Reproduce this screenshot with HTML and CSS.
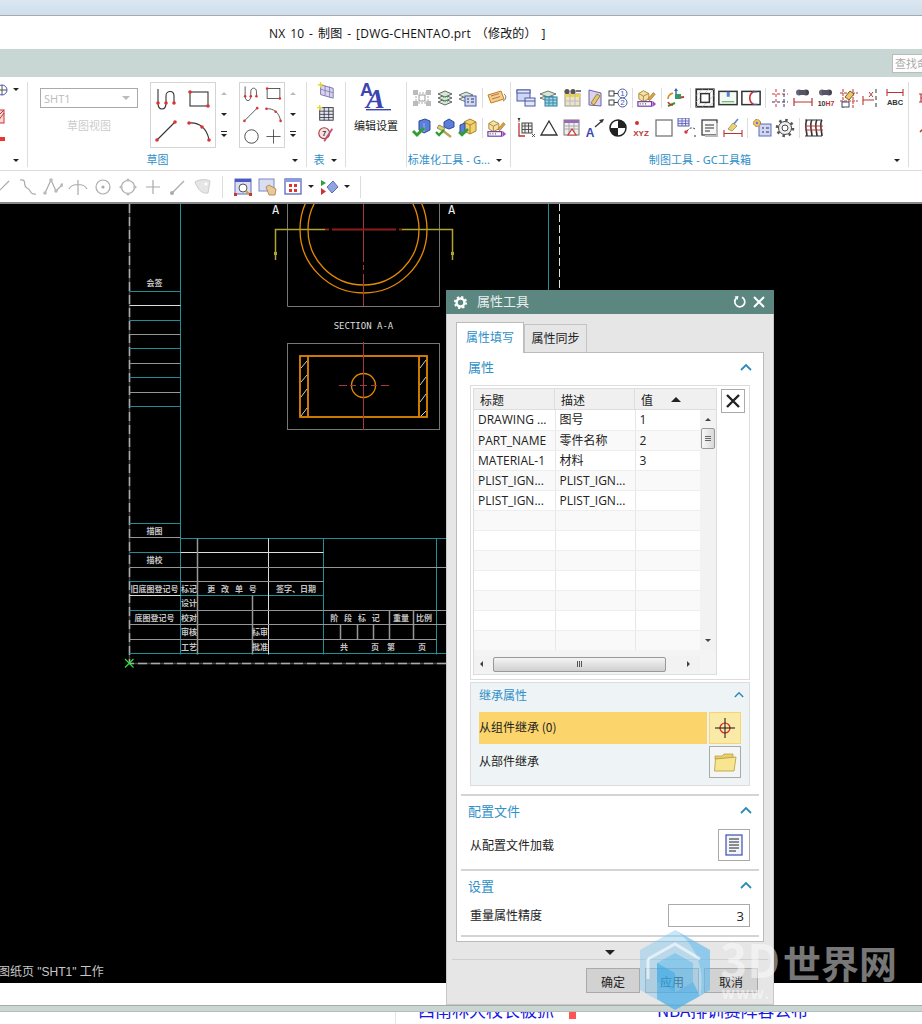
FILE: index.html
```html
<!DOCTYPE html>
<html lang="zh">
<head>
<meta charset="utf-8">
<title>NX 10 - 制图</title>
<link rel="stylesheet" href="styles.css">
</head>
<body>
<svg class="defs" width="0" height="0" aria-hidden="true">
  <defs>
    <symbol id="g-curve" viewBox="0 0 24 24"><path d="M3 2v14c0 8 8 8 8 0V9c0-6 8-6 8 0v7" fill="none" stroke="#333" stroke-width="1.1"/><circle cx="3" cy="16" r="1.8" fill="#d33"/><circle cx="11" cy="16" r="1.8" fill="#d33"/><circle cx="19" cy="16" r="1.8" fill="#d33"/></symbol>
    <symbol id="g-rect" viewBox="0 0 24 24"><rect x="3" y="5" width="18" height="14" fill="none" stroke="#333" stroke-width="1.1"/><circle cx="3" cy="5" r="1.8" fill="#d33"/><circle cx="21" cy="19" r="1.8" fill="#d33"/></symbol>
    <symbol id="g-line" viewBox="0 0 24 24"><path d="M2 21 20 3" stroke="#333" stroke-width="1.1"/><circle cx="2" cy="21" r="1.8" fill="#d33"/><circle cx="20" cy="3" r="1.8" fill="#d33"/></symbol>
    <symbol id="g-arc" viewBox="0 0 24 24"><path d="M2 4C12 3 20 9 22 21" fill="none" stroke="#333" stroke-width="1.1"/><circle cx="2" cy="4" r="1.8" fill="#d33"/><circle cx="15" cy="8" r="1.8" fill="#d33"/><circle cx="22" cy="21" r="1.8" fill="#d33"/></symbol>
    <symbol id="g-circle" viewBox="0 0 24 24"><circle cx="12" cy="12" r="9.5" fill="none" stroke="#333" stroke-width="1.2"/></symbol>
    <symbol id="g-plus" viewBox="0 0 24 24"><path d="M12 2v20M2 12h20" stroke="#333" stroke-width="1.1"/></symbol>

    <symbol id="t-new" viewBox="0 0 20 20"><path d="M4 3 18 7v11L4 14z" fill="#d8d4ee" stroke="#776fa8"/><path d="M4 8l14 4M9 4v11M14 5v12" stroke="#776fa8" stroke-width=".8"/><path d="M4 0v6M1 3h6" stroke="#e9d52e" stroke-width="1.6"/></symbol>
    <symbol id="t-table" viewBox="0 0 20 20"><rect x="3" y="4" width="15" height="14" fill="#dfe3f3" stroke="#333"/><path d="M3 8h15M3 11.5h15M3 15h15M8 4v14M13 4v14" stroke="#333" stroke-width=".9"/><path d="M3 1v6M0 4h6" stroke="#e9d52e" stroke-width="1.6"/></symbol>
    <symbol id="t-ball" viewBox="0 0 20 20"><circle cx="8" cy="8" r="6" fill="#f5e3e3" stroke="#a33" stroke-width="1.2"/><text x="8" y="11.5" class="svg-num" fill="#333">7</text><path d="M17 3 8 17" stroke="#b57" stroke-width="2"/></symbol>
    <symbol id="t-edit" viewBox="0 0 32 30"><text x="0" y="14" class="svg-a-small">A</text><text x="6" y="26" class="svg-a-big">A</text><rect x="6" y="27" width="25" height="1.4" fill="#3d46b0"/></symbol>

    <symbol id="s-pts" viewBox="0 0 20 20"><path d="M4 5h12v10H4z" fill="none" stroke="#aaa" stroke-dasharray="2 1"/><rect x="1" y="2" width="5" height="5" fill="#bbb"/><rect x="14" y="2" width="5" height="5" fill="#bbb"/><rect x="1" y="13" width="5" height="5" fill="#bbb"/><rect x="14" y="13" width="5" height="5" fill="#bbb"/><rect x="7" y="7" width="6" height="6" fill="#fff" stroke="#999"/></symbol>
    <symbol id="s-stack" viewBox="0 0 20 20"><g fill="#d5e7d8" stroke="#444" stroke-width=".8"><path d="M3 14l7-3 7 3-7 3z"/><path d="M3 10l7-3 7 3-7 3z"/><path d="M3 6l7-3 7 3-7 3z"/></g><path d="M8 9h6M8 13h6" stroke="#393" stroke-dasharray="1 1"/></symbol>
    <symbol id="s-stackdoc" viewBox="0 0 20 20"><g fill="#d5e7d8" stroke="#555" stroke-width=".8"><path d="M1 11l7-3 7 3-7 3z"/><path d="M1 7l7-3 7 3-7 3z"/></g><rect x="7" y="8" width="11" height="10" fill="#cfd8f2" stroke="#4a5aa8"/><path d="M9 11h2M9 14h2M13 11h3M13 14h3" stroke="#334"/></symbol>
    <symbol id="s-tag" viewBox="0 0 20 20"><path d="M1 7l13-4 3 8-13 4z" fill="#f4cf87" stroke="#c77d18"/><path d="M4 8l8-2.4M5 11l8-2.4" stroke="#a66" stroke-width=".9"/><path d="M17 6c3 2 2 6-1 7" fill="none" stroke="#777"/></symbol>
    <symbol id="s-part" viewBox="0 0 20 20"><path d="M7 3l6-2 5 2v9l-6 3-5-3z" fill="#5b7fd6" stroke="#2d4aa0"/><path d="M12 5v9" stroke="#9db4ec"/><path d="M1 13l4 4 7-7" fill="none" stroke="#2f9e34" stroke-width="3"/></symbol>
    <symbol id="s-hammer" viewBox="0 0 20 20"><path d="M9 4l5-3 5 3v5l-5 2-5-2z" fill="#5b7fd6" stroke="#2d4aa0"/><path d="M4 7l6 3-2 3-6-3z" fill="#e7d25a" stroke="#887"/><path d="M7 12l9 7" stroke="#b9a65d" stroke-width="2.4"/><path d="M1 14l3 3 5-5" fill="none" stroke="#2f9e34" stroke-width="2.4"/></symbol>
    <symbol id="s-boxes" viewBox="0 0 20 20"><path d="M6 4l6-3 6 3v9l-6 3-6-3z" fill="#f1d26e" stroke="#a8842c"/><path d="M6 4l6 3 6-3M12 7v9" fill="none" stroke="#a8842c"/><path d="M2 7l5-2v9l-5 2z" fill="#5b7fd6" stroke="#2d4aa0"/><path d="M1 14l3 3 6-6" fill="none" stroke="#2f9e34" stroke-width="2.6"/></symbol>
    <symbol id="s-pack" viewBox="0 0 22 20"><path d="M2 5l5-3 6 3v6l-6 3-5-3z" fill="#f4e1a8" stroke="#a8842c"/><path d="M2 5l5 3 6-3M7 8v6" fill="none" stroke="#a8842c"/><path d="M12 11l6-7 2 2-6 7z" fill="#e0a33a" stroke="#7d5a1a" stroke-width=".6"/><rect x="1" y="14" width="15" height="5" fill="#fff" stroke="#6d3fa8" stroke-width="1.3"/><path d="M3 16.500h1M6 16.500h1M9 16.500h1" stroke="#333" stroke-width="1.4"/><path d="M17 13l4 3.500-4 3.500z" fill="#9b4fc0"/></symbol>

    <symbol id="d-win" viewBox="0 0 20 20"><rect x="1" y="2" width="13" height="11" fill="#cfd8f2" stroke="#4a5aa8"/><rect x="1" y="2" width="13" height="3" fill="#e6ebfa" stroke="#4a5aa8"/><rect x="9" y="10" width="10" height="8" fill="#e4e8f6" stroke="#4a5aa8"/><path d="M9 13h10" stroke="#4a5aa8"/></symbol>
    <symbol id="d-stacktab" viewBox="0 0 20 20"><g fill="#d5e7d8" stroke="#555" stroke-width=".8"><path d="M1 10l8-3 8 3-8 3z"/><path d="M1 6l8-3 8 3-8 3z"/></g><rect x="6" y="9" width="12" height="9" fill="#9fd4ea" stroke="#2a7f9a"/><path d="M6 12h12M6 15h12M10 9v9M14 9v9" stroke="#2a7f9a" stroke-width=".8"/></symbol>
    <symbol id="d-bintab" viewBox="0 0 20 20"><rect x="3" y="6" width="15" height="12" fill="#efe6b8" stroke="#999"/><rect x="3" y="6" width="15" height="3" fill="#f0d34a"/><path d="M3 13h15M8 6v12M13 6v12" stroke="#b7b7d6"/><circle cx="5" cy="3.500" r="2.600" fill="#555"/><circle cx="11" cy="3.500" r="2.600" fill="#555"/><rect x="14" y="2" width="5" height="2" fill="#777"/></symbol>
    <symbol id="d-sheettool" viewBox="0 0 16 20"><path d="M2 2 14 5v13L2 17z" fill="#d9d4ee" stroke="#6d5fa8"/><path d="M6 12l4-6 3 2-4 6-2 3-3-2z" fill="#e8c86a" stroke="#8a6a2a" stroke-width=".8"/></symbol>
    <symbol id="d-num" viewBox="0 0 20 20"><rect x="1" y="3" width="5" height="5" fill="#fff" stroke="#444"/><rect x="1" y="12" width="5" height="5" fill="#fff" stroke="#444"/><path d="M6 5.500h4M6 14.500h4" stroke="#444"/><circle cx="14.500" cy="5.500" r="4.500" fill="#fff" stroke="#4a5aa8"/><circle cx="14.500" cy="14.500" r="4.500" fill="#fff" stroke="#4a5aa8"/><text x="14.500" y="8.300" class="svg-tiny" fill="#4a5aa8">1</text><text x="14.500" y="17.300" class="svg-tiny" fill="#4a5aa8">2</text></symbol>
    <symbol id="d-axis" viewBox="0 0 20 20"><path d="M10 2v8" stroke="#36a" stroke-width="1.4"/><path d="M10 10l8-1" stroke="#c33" stroke-width="2"/><path d="M2 18l7-3" stroke="#393" stroke-width="2"/><path d="M2 11c0-3 2-5 5-6" fill="none" stroke="#d78a1e" stroke-width="1.6"/><path d="M2 14c1 2 3 3 5 3" fill="none" stroke="#c33" stroke-width="1.6"/><path d="M10 0l-2 3h4z" fill="#36a"/><rect x="9" y="6" width="6" height="5" fill="#396"/></symbol>
    <symbol id="d-sq" viewBox="0 0 16 16"><rect x="1" y="1" width="14" height="14" fill="#fff" stroke="#333" stroke-width="1.400"/><path d="M1 6 6 1M1 11 11 1M1 15 15 1M6 15 15 6M11 15l4-4" stroke="#bbb" stroke-width=".6"/><rect x="4.500" y="4.500" width="7" height="7" fill="#fff" stroke="#333" stroke-width="1.200"/></symbol>
    <symbol id="d-rmark" viewBox="0 0 16 12"><rect x=".7" y=".7" width="14.600" height="10.600" fill="#f4fbf4" stroke="#333" stroke-width="1.200"/><rect x="7" y="1" width="2.400" height="4" fill="#5b7fd6"/><path d="M3 9h10" stroke="#4a4" stroke-width=".8"/></symbol>
    <symbol id="d-rarc" viewBox="0 0 16 12"><rect x=".7" y=".7" width="14.600" height="10.600" fill="#fff" stroke="#333" stroke-width="1.200"/><path d="M10 1C6 3 6 9 10 11" fill="none" stroke="#c33" stroke-width="1.300"/><path d="M10 1h3M10 11h3" stroke="#36a"/></symbol>
    <symbol id="d-grid" viewBox="0 0 20 20"><g fill="none" stroke="#c33" stroke-dasharray="3 2"><path d="M2 6h16"/><path d="M6 1v18"/></g><g fill="none" stroke="#336" stroke-dasharray="3 2"><path d="M2 14h16"/><path d="M14 1v18"/></g></symbol>
    <symbol id="d-bindim" viewBox="0 0 20 20"><circle cx="6" cy="4.500" r="3" fill="#667"/><circle cx="13" cy="4.500" r="3" fill="#445"/><rect x="6" y="2" width="7" height="5" fill="#556"/><path d="M1 10v8M19 10v8M1 14h18" stroke="#b33" stroke-width="1.200"/></symbol>
    <symbol id="d-h7" viewBox="0 0 20 20"><circle cx="6" cy="4.500" r="3" fill="#667"/><circle cx="13" cy="4.500" r="3" fill="#445"/><rect x="6" y="2" width="7" height="5" fill="#556"/><text x="10" y="18" class="svg-h7"><tspan fill="#333">10</tspan><tspan fill="#b33">H7</tspan></text></symbol>
    <symbol id="d-gridtool" viewBox="0 0 20 20"><path d="M4 1v19M14 1v19M1 5h18M1 13h18" stroke="#b33" stroke-dasharray="3 1"/><path d="M6 9l5-6 4 3-5 6z" fill="#e8c86a" stroke="#7a5a1a"/><rect x="3" y="14" width="7" height="5" fill="#fff" stroke="#446"/></symbol>
    <symbol id="d-xdim" viewBox="0 0 20 20"><path d="M1 8v9M1 12h11M12 12h0" stroke="#b33" stroke-width="1.100"/><path d="M14 1v4M14 8v4M14 15v4" stroke="#333"/><path d="M7 4l4 5M11 4 7 9" stroke="#b33"/></symbol>
    <symbol id="d-abc" viewBox="0 0 20 20"><path d="M2 1v7M18 1v7M2 4.500h16" stroke="#b33" stroke-width="1.100"/><text x="10" y="17" class="svg-abc">ABC</text></symbol>

    <symbol id="e-gridxy" viewBox="0 0 20 20"><rect x="6" y="5" width="10" height="10" fill="#eee" stroke="#444"/><path d="M6 8h10M6 11.500h10M9 5v10M12.500 5v10" stroke="#444" stroke-width=".9"/><path d="M3 5v13h6" fill="none" stroke="#b33" stroke-width="1.300"/><path d="M2 0l1 2 1-2M3 2v2M16 16l3 3M19 16l-3 3" stroke="#333" stroke-width=".8"/></symbol>
    <symbol id="e-tri" viewBox="0 0 20 20"><path d="M10 3 18 17H2z" fill="#fff" stroke="#333" stroke-width="1.300"/></symbol>
    <symbol id="e-tabtri" viewBox="0 0 20 20"><rect x="2" y="2" width="15" height="15" fill="#eee" stroke="#777"/><rect x="2" y="2" width="15" height="3" fill="#9a6ab4"/><path d="M2 8h15M2 11h15M7 5v12M12 5v12" stroke="#aaa"/><path d="M10 11l4 6H6z" fill="#fff" stroke="#c33" stroke-width="1.200"/></symbol>
    <symbol id="e-aarrow" viewBox="0 0 20 20"><text x="5" y="19" class="svg-a-blue">A</text><path d="M10 9 18 2" stroke="#333" stroke-width="1.300"/><path d="M19 1l-5 1 3 3z" fill="#333"/></symbol>
    <symbol id="e-half" viewBox="0 0 20 20"><circle cx="10" cy="10" r="8" fill="#fff" stroke="#222" stroke-width="1.500"/><path d="M10 10V2a8 8 0 0 1 8 8zM10 10v8a8 8 0 0 1-8-8z" fill="#222"/></symbol>
    <symbol id="e-xyz" viewBox="0 0 20 20"><circle cx="6" cy="5" r="2" fill="#c33"/><text x="10" y="18" class="svg-xyz">XYZ</text></symbol>
    <symbol id="e-empty" viewBox="0 0 20 20"><rect x="2" y="2" width="16" height="16" fill="#fff" stroke="#777" stroke-width="1.300"/></symbol>
    <symbol id="e-tabarc" viewBox="0 0 20 20"><rect x="1" y="0" width="11" height="8" fill="#e6e8f8" stroke="#5a5ab4"/><path d="M1 3h11M1 5.500h11M5 0v8M8.500 0v8" stroke="#5a5ab4" stroke-width=".8"/><path d="M18 11a5 5 0 0 0-8 3" fill="none" stroke="#333" stroke-dasharray="2 1.500"/><path d="M18 17v2" stroke="#333"/><circle cx="9" cy="14" r="1.700" fill="#d33"/></symbol>
    <symbol id="e-doc" viewBox="0 0 20 20"><rect x="2" y="2" width="15" height="15" fill="#f8f8f8" stroke="#333" stroke-width="1.200"/><path d="M17 5v13H5" fill="none" stroke="#bbb" stroke-width="2"/><path d="M5 7h9M5 10h9M5 13h5" stroke="#333"/></symbol>
    <symbol id="e-broom" viewBox="0 0 20 20"><path d="M1 12v7M19 12v7M1 15.500h18" stroke="#b33" stroke-width="1.100"/><path d="M15 1 10 7" stroke="#5b7fd6" stroke-width="1.500"/><path d="M10 5l4 3-5 5-4-2z" fill="#e8d27a" stroke="#9a8433" stroke-width=".7"/></symbol>
    <symbol id="e-geardoc" viewBox="0 0 20 20"><rect x="7" y="6" width="12" height="12" fill="#cfd8f2" stroke="#5a6ac0"/><path d="M10 10h2M10 14h2M14 10h3M14 14h3" stroke="#334"/><circle cx="5" cy="5" r="3.500" fill="#f0c36a" stroke="#b07a20" stroke-dasharray="2 .8"/><circle cx="5" cy="5" r="1.200" fill="#5b7fd6"/></symbol>
    <symbol id="e-gear" viewBox="0 0 20 20"><circle cx="10" cy="10" r="6.500" fill="#f0f0f0" stroke="#444"/><circle cx="10" cy="10" r="8" fill="none" stroke="#555" stroke-width="2.600" stroke-dasharray="2.500 3.780"/><circle cx="10" cy="10" r="3" fill="#fff" stroke="#444"/></symbol>
    <symbol id="e-coil" viewBox="0 0 20 20"><path d="M3 2c-3 4 0 12 0 16M8 2c-3 4 0 12 0 16M13 2c-3 4 0 12 0 16M18 2c-3 4 0 12 0 16" fill="none" stroke="#333" stroke-width="1.600"/><path d="M1 2h17M1 18h17" stroke="#333" stroke-width="1.200"/><path d="M1 8h18M1 12h18" stroke="#c33"/></symbol>

    <symbol id="b-line" viewBox="0 0 20 20"><path d="M4 16 16 4" stroke="#aaa" stroke-width="1.200"/><circle cx="4" cy="16" r="2" fill="#aaa"/></symbol>
    <symbol id="b-spline" viewBox="0 0 20 20"><path d="M2 3c8-1 2 6 7 8s2 7 9 6" fill="none" stroke="#aaa" stroke-width="1.200"/></symbol>
    <symbol id="b-poly" viewBox="0 0 20 20"><path d="M2 16 8 3l5 11 6-6" fill="none" stroke="#aaa" stroke-width="1.200"/><g fill="#bbb"><circle cx="2" cy="16" r="1.800"/><circle cx="8" cy="3" r="1.800"/><circle cx="13" cy="14" r="1.800"/><circle cx="19" cy="8" r="1.800"/></g></symbol>
    <symbol id="b-arcs" viewBox="0 0 20 20"><path d="M1 12c3-6 15-6 18 0M10 3v15" fill="none" stroke="#aaa" stroke-width="1.200"/></symbol>
    <symbol id="b-cdot" viewBox="0 0 20 20"><circle cx="10" cy="10" r="7" fill="none" stroke="#aaa" stroke-width="1.200"/><circle cx="10" cy="10" r="1.600" fill="#aaa"/></symbol>
    <symbol id="b-cpts" viewBox="0 0 20 20"><circle cx="10" cy="10" r="6.500" fill="none" stroke="#aaa" stroke-width="1.200"/><g fill="#bbb"><circle cx="10" cy="3" r="1.600"/><circle cx="10" cy="17" r="1.600"/><circle cx="3" cy="10" r="1.600"/><circle cx="17" cy="10" r="1.600"/></g></symbol>
    <symbol id="b-plus" viewBox="0 0 20 20"><path d="M10 3v14M3 10h14" stroke="#aaa" stroke-width="1.200"/></symbol>
    <symbol id="b-face" viewBox="0 0 20 20"><path d="M2 5c5-3 11-3 15-1l-2 12c-6 1-10-3-13-11z" fill="#e6e6e6" stroke="#ccc"/><circle cx="13" cy="7" r="1.500" fill="#fff"/></symbol>
    <symbol id="v-fit" viewBox="0 0 20 20"><rect x="2" y="2" width="16" height="15" fill="#d9def2" stroke="#5a6ac0"/><rect x="2" y="2" width="16" height="3" fill="#4a5ac0"/><circle cx="10" cy="11" r="4" fill="#fff" stroke="#555"/><path d="M13 14l3 3" stroke="#c9a227" stroke-width="2"/><rect x="1" y="16" width="3" height="3" fill="#c33"/><rect x="16" y="16" width="3" height="3" fill="#c33"/></symbol>
    <symbol id="v-hand" viewBox="0 0 20 20"><rect x="2" y="2" width="15" height="12" fill="#d9def2" stroke="#7c87c4"/><path d="M9 10l3 8h6l1-6-7-4z" fill="#e9c89a" stroke="#a67c42" stroke-width=".8"/></symbol>
    <symbol id="v-win" viewBox="0 0 20 20"><rect x="2" y="2" width="16" height="15" fill="#fff" stroke="#4a5ac0" stroke-width="1.200"/><rect x="2" y="2" width="16" height="3" fill="#8d9ae0"/><g fill="#d33"><rect x="6" y="7" width="3" height="3"/><rect x="11" y="7" width="3" height="3"/><rect x="6" y="12" width="3" height="3"/><rect x="11" y="12" width="3" height="3"/></g></symbol>
    <symbol id="v-mode" viewBox="0 0 20 20"><path d="M8 10l6-6 5 6-6 6z" fill="#8fa5e0" stroke="#5a6ac0"/><path d="M2 3v6l5-3z" fill="#2f9e34"/><path d="M2 11v7l5-3.500z" fill="#c33"/></symbol>
  </defs>
</svg>

<div class="app">
  <div class="top-strip"></div>
  <header class="title-bar">NX 10 - 制图 - [DWG-CHENTAO.prt （修改的） ]</header>
  <div class="tab-strip"><div class="find">查找命令</div></div>

  <section class="ribbon">
    <div class="grp g0">
      <div class="grp-body g0-body">
        <svg class="i20" viewBox="0 0 20 20"><circle cx="2" cy="7" r="5" fill="#fff" stroke="#4a5ac0"/><path d="M-3 7h10M2 2v10" stroke="#555"/></svg>
        <svg class="i20" viewBox="0 0 20 20"><rect x="-6" y="3" width="10" height="13" fill="#f5d8d8" stroke="#c33"/><path d="M-2 14 4 6M-2 9l6-6" stroke="#c33"/></svg>
        <div class="red-mark"></div>
      </div>
      <div class="grp-foot"><span class="grp-label"></span><span class="caret"></span></div>
      <span class="caret caret-top"></span>
    </div>

    <div class="grp g1">
      <div class="grp-body sketch">
        <div class="sheet-col">
          <div class="select"><span>SHT1</span><i class="caret caret-grey"></i></div>
          <div class="disabled-label">草图视图</div>
        </div>
        <div class="gallery gal-a">
          <svg class="ig"><use href="#g-curve"/></svg><svg class="ig"><use href="#g-rect"/></svg>
          <svg class="ig"><use href="#g-line"/></svg><svg class="ig"><use href="#g-arc"/></svg>
        </div>
        <div class="gal-arrows"><i class="caret caret-up"></i><i class="caret"></i><i class="caret caret-bar"></i></div>
        <div class="gallery gal-b">
          <svg class="ih"><use href="#g-curve"/></svg><svg class="ih"><use href="#g-rect"/></svg>
          <svg class="ih"><use href="#g-line"/></svg><svg class="ih"><use href="#g-arc"/></svg>
          <svg class="ih"><use href="#g-circle"/></svg><svg class="ih"><use href="#g-plus"/></svg>
        </div>
        <div class="gal-arrows"><i class="caret caret-up"></i><i class="caret"></i><i class="caret caret-bar"></i></div>
      </div>
      <div class="grp-foot"><span class="grp-label">草图</span><span class="caret"></span></div>
    </div>

    <div class="grp g2">
      <div class="grp-body tb-col">
        <svg class="i18"><use href="#t-new"/></svg>
        <svg class="i18"><use href="#t-table"/></svg>
        <svg class="i18"><use href="#t-ball"/></svg>
      </div>
      <div class="grp-foot"><span class="grp-label">表</span><span class="caret"></span></div>
    </div>

    <div class="grp g3">
      <div class="grp-body edit-col">
        <svg class="i-edit"><use href="#t-edit"/></svg>
        <div class="edit-label">编辑设置</div>
      </div>
    </div>

    <div class="grp g4">
      <div class="grp-body rows">
        <div class="irow">
          <svg class="ic"><use href="#s-pts"/></svg><svg class="ic"><use href="#s-stack"/></svg><svg class="ic"><use href="#s-stackdoc"/></svg><i class="isep"></i><svg class="ic"><use href="#s-tag"/></svg>
        </div>
        <div class="irow">
          <svg class="ic"><use href="#s-part"/></svg><svg class="ic"><use href="#s-hammer"/></svg><svg class="ic"><use href="#s-boxes"/></svg><i class="isep"></i><svg class="ic"><use href="#s-pack"/></svg>
        </div>
      </div>
      <div class="grp-foot"><span class="grp-label">标准化工具 - G...</span><span class="caret"></span></div>
    </div>

    <div class="grp g5">
      <div class="grp-body rows">
        <div class="irow">
          <svg class="ic"><use href="#d-win"/></svg><svg class="ic"><use href="#d-stacktab"/></svg><svg class="ic"><use href="#d-bintab"/></svg><svg class="ic"><use href="#d-sheettool"/></svg><svg class="ic"><use href="#d-num"/></svg><i class="isep"></i>
          <svg class="ic"><use href="#s-pack"/></svg><i class="isep"></i>
          <svg class="ic"><use href="#d-axis"/></svg><i class="isep"></i>
          <svg class="ic"><use href="#d-sq"/></svg><svg class="ic"><use href="#d-rmark"/></svg><svg class="ic"><use href="#d-rarc"/></svg><i class="isep"></i>
          <svg class="ic"><use href="#d-grid"/></svg><svg class="ic"><use href="#d-bindim"/></svg><svg class="ic"><use href="#d-h7"/></svg><svg class="ic"><use href="#d-gridtool"/></svg><svg class="ic"><use href="#d-xdim"/></svg><svg class="ic"><use href="#d-abc"/></svg>
        </div>
        <div class="irow">
          <svg class="ic"><use href="#e-gridxy"/></svg><svg class="ic"><use href="#e-tri"/></svg><svg class="ic"><use href="#e-tabtri"/></svg><svg class="ic"><use href="#e-aarrow"/></svg><svg class="ic"><use href="#e-half"/></svg><svg class="ic"><use href="#e-xyz"/></svg><svg class="ic"><use href="#e-empty"/></svg><svg class="ic"><use href="#e-tabarc"/></svg><svg class="ic"><use href="#e-doc"/></svg><svg class="ic"><use href="#e-broom"/></svg><i class="isep"></i>
          <svg class="ic"><use href="#e-geardoc"/></svg><svg class="ic"><use href="#e-gear"/></svg><i class="isep"></i>
          <svg class="ic"><use href="#e-coil"/></svg>
        </div>
      </div>
      <div class="grp-foot"><span class="grp-label">制图工具 - GC工具箱</span><span class="caret"></span></div>
    </div>

    <div class="grp g6">
      <div class="grp-body rows g6-body">
        <svg class="ic" viewBox="0 0 20 20"><path d="M10 6v8M10 10h8M8 6h4M8 14h4" stroke="#b33" stroke-width="1.200"/></svg>
        <svg class="ic" viewBox="0 0 20 20"><path d="M9 14l9-9" stroke="#b33" stroke-width="1.500" stroke-dasharray="3 2"/></svg>
      </div>
    </div>
  </section>

  <nav class="toolbar">
    <svg class="tb"><use href="#b-line"/></svg><svg class="tb"><use href="#b-spline"/></svg><svg class="tb"><use href="#b-poly"/></svg><svg class="tb"><use href="#b-arcs"/></svg><svg class="tb"><use href="#b-cdot"/></svg><svg class="tb"><use href="#b-cpts"/></svg><svg class="tb"><use href="#b-plus"/></svg><svg class="tb"><use href="#b-line"/></svg><svg class="tb"><use href="#b-face"/></svg>
    <i class="tsep"></i>
    <svg class="tb tv"><use href="#v-fit"/></svg><svg class="tb tv tv-gap"><use href="#v-hand"/></svg><svg class="tb tv"><use href="#v-win"/></svg><i class="caret tcaret"></i><svg class="tb tv"><use href="#v-mode"/></svg><i class="caret tcaret"></i>
    <i class="tsep tsep-end"></i>
  </nav>

  <main class="canvas">
    <svg class="drawing" viewBox="0 203 922 780" width="922" height="780">
      <!-- frame -->
      <path class="frame-under" d="M129.500 204V663.500H446"/>
      <path class="dash-frame" d="M129.500 204V663.500H446"/>
      <g class="teal">
        <path d="M180 203V654M129 291H180M129 320H180M129 348H180M129 377H180M129 406H180M129 523H180M129 552H180M129 581H180M129 610H180M180 538H446M323 538V654M436 538V654M129 653H446M180 595H323M548 203V290"/>
      </g>
      <g class="whiteln">
        <path d="M129 305H180M129 595H180M180 552H323M268 538V654"/>
      </g>
      <path class="whitedash" d="M559.500 203V290"/>
      <g class="greyln">
        <path d="M129 334H180M129 363H180M129 392H180M129 537H180M129 567H446M129 624H446M129 639H436M180 581H323M180 610H446"/>
      </g>
      <g class="greyln2">
        <path d="M197 538V654M252 595V654M389 610V639M413 610V639M340 624V639M357 624V639M373 624V639"/>
      </g>
      <!-- views -->
      <g class="viewbox"><path d="M287.500 203V306.500H439.500V203"/><rect x="287.500" y="343.500" width="152" height="86"/></g>
      <g class="orange"><circle cx="363.500" cy="229.500" r="63.500"/><circle cx="363.500" cy="229.500" r="55.500"/></g>
      <path class="centre" d="M363.500 203V262M363.500 265V270M363.500 274V306"/>
      <path class="cut-olive" d="M275.500 260V229.500H325M402 229.500H452.500V260"/>
      <path class="cut-red" d="M325 229.500H329M332 229.500H396M399 229.500H402"/>
      <rect class="olive-dot" x="274" y="252" width="3" height="3"/><rect class="olive-dot" x="451" y="252" width="3" height="3"/>
      <g class="orange2"><rect x="300" y="356" width="127" height="61"/><path d="M308 356V417M419 356V417"/></g>
      <circle class="orange" cx="363.500" cy="385.500" r="12"/>
      <path class="centre" d="M363.500 342V430M339 385.500H347M350 385.500H356M360 385.500H367M371 385.500H377M381 385.500H389"/>
      <path class="hatch" d="M301 368 307 361M301 382 307 375M301 397 307 389M301 416 307 408M420 368 426 360M420 385 426 377M420 402 426 394M421 416 426 411"/>
      <!-- labels -->
      <text class="dim-a" x="275.500" y="214">A</text>
      <text class="dim-a" x="451.500" y="214">A</text>
      <text class="section" x="363.500" y="329">SECTION A-A</text>
      <g class="tiny">
        <text x="154.500" y="286">会签</text>
        <text x="154.500" y="534">描图</text>
        <text x="154.500" y="563">描校</text>
        <text x="154.500" y="592">旧底图登记号</text>
        <text x="154.500" y="621">底图登记号</text>
        <text x="189" y="592">标记</text>
        <text x="189" y="606">设计</text>
        <text x="189" y="621">校对</text>
        <text x="189" y="635">审核</text>
        <text x="189" y="650">工艺</text>
        <text x="233" y="592" class="wide">更 改 单 号</text>
        <text x="296" y="592">签字、日期</text>
        <text x="260" y="635">标审</text>
        <text x="260" y="650">批准</text>
        <text x="356" y="621" class="wide">阶 段 标 记</text>
        <text x="401" y="621">重量</text>
        <text x="424" y="621">比例</text>
        <text x="344" y="650">共</text>
        <text x="375" y="650">页</text>
        <text x="391" y="650">第</text>
        <text x="422" y="650">页</text>
      </g>
      <path class="origin" d="M125 659 133.500 667.500M133.500 659 125 667.500"/>
    </svg>
    <div class="status-msg">图纸页 "SHT1" 工作</div>
  </main>

  <div class="status-bar"></div>
  <div class="bottom-strip"></div>
  <div class="web-row">
    <span class="web-a">西南林大校长被抓</span>
    <i class="web-flag"></i>
    <span class="web-b">NBA排训赛阵容公布</span>
  </div>
</div>

<!-- dialog floats over the app window -->
<aside class="dialog">
  <div class="dlg-head">
    <svg class="dlg-gear" viewBox="0 0 16 16"><circle cx="8" cy="8" r="4.200" fill="none" stroke="#fff" stroke-width="2.600"/><circle cx="8" cy="8" r="6" fill="none" stroke="#fff" stroke-width="2" stroke-dasharray="2.400 2.312"/></svg>
    <span class="dlg-title">属性工具</span>
    <svg class="dlg-btn" viewBox="0 0 14 14"><path d="M3.300 3.200A5 5 0 1 0 9 2.300" fill="none" stroke="#fff" stroke-width="1.700"/><path d="M1.500 1.500 5.500 1 4.500 5z" fill="#fff"/></svg>
    <svg class="dlg-btn" viewBox="0 0 14 14"><path d="M2 2 12 12M12 2 2 12" stroke="#fff" stroke-width="2"/></svg>
  </div>
  <div class="dlg-tabs">
    <div class="tab tab-on">属性填写</div>
    <div class="tab">属性同步</div>
  </div>
  <div class="panel">
    <div class="sec-head sec-first"><span>属性</span><svg class="chev" viewBox="0 0 12 8"><path d="M1 7 6 2 11 7" fill="none" stroke="#2d8bb8" stroke-width="1.800"/></svg></div>
    <div class="listbox">
      <div class="list-main">
        <div class="list-grid">
          <div class="list-head"><div class="lh c1">标题</div><div class="lh c2">描述</div><div class="lh c3">值<i class="sort-up"></i></div></div>
          <div class="list-body">
            <table class="rows-table">
              <tbody>
                <tr><td>DRAWING ...</td><td>图号</td><td>1</td></tr>
                <tr><td>PART_NAME</td><td>零件名称</td><td>2</td></tr>
                <tr><td>MATERIAL-1</td><td>材料</td><td>3</td></tr>
                <tr><td>PLIST_IGN...</td><td>PLIST_IGN...</td><td></td></tr>
                <tr><td>PLIST_IGN...</td><td>PLIST_IGN...</td><td></td></tr>
                <tr><td></td><td></td><td></td></tr>
                <tr><td></td><td></td><td></td></tr>
                <tr><td></td><td></td><td></td></tr>
                <tr><td></td><td></td><td></td></tr>
                <tr><td></td><td></td><td></td></tr>
                <tr><td></td><td></td><td></td></tr>
                <tr><td></td><td></td><td></td></tr>
              </tbody>
            </table>
            <div class="vscroll">
              <i class="sb-up"></i>
              <div class="vthumb"><b></b><b></b><b></b></div>
              <i class="sb-down"></i>
            </div>
          </div>
          <div class="hscroll">
            <i class="sb-left"></i>
            <div class="hthumb"><b></b><b></b><b></b></div>
            <i class="sb-right"></i>
          </div>
        </div>
        <button class="x-btn" type="button"><svg viewBox="0 0 16 16" width="16" height="16"><path d="M2 2 14 14M14 2 2 14" stroke="#222" stroke-width="2.400"/></svg></button>
      </div>
    </div>
    <div class="inherit">
      <div class="inh-head"><span>继承属性</span><svg class="chev" viewBox="0 0 12 8"><path d="M1 7 6 2 11 7" fill="none" stroke="#2d8bb8" stroke-width="1.800"/></svg></div>
      <div class="inh-row">
        <div class="inh-label inh-on">从组件继承 (0)</div>
        <button class="sq-btn sq-on" type="button"><svg viewBox="0 0 20 20" width="20" height="20"><circle cx="10" cy="10" r="5" fill="none" stroke="#d22" stroke-width="1.200"/><path d="M10 0V20M0 10H20" stroke="#111"/></svg></button>
      </div>
      <div class="inh-row">
        <div class="inh-label">从部件继承</div>
        <button class="sq-btn" type="button"><svg viewBox="0 0 24 22" width="24" height="22"><path d="M2 5h7l2-2h9v4L2 8z" fill="#e8cf6a" stroke="#b89a3a" stroke-width=".7"/><path d="M1.500 20 2.500 8 23 6 21 20z" fill="#f7e68f" stroke="#b89a3a" stroke-width=".8"/></svg></button>
      </div>
    </div>
    <hr class="rule">
    <div class="sec-head"><span>配置文件</span><svg class="chev" viewBox="0 0 12 8"><path d="M1 7 6 2 11 7" fill="none" stroke="#2d8bb8" stroke-width="1.800"/></svg></div>
    <div class="form-row row-file">
      <span>从配置文件加载</span>
      <button class="sq-btn" type="button"><svg viewBox="0 0 18 22" width="18" height="22"><rect x="1" y="1" width="16" height="20" fill="#f3f5fd" stroke="#3c4eb0" stroke-width="1.200"/><path d="M4 5h10M4 8h10M4 11h10M4 14h10M4 17h7" stroke="#222"/></svg></button>
    </div>
    <hr class="rule">
    <div class="sec-head"><span>设置</span><svg class="chev" viewBox="0 0 12 8"><path d="M1 7 6 2 11 7" fill="none" stroke="#2d8bb8" stroke-width="1.800"/></svg></div>
    <div class="form-row row-prec">
      <span>重量属性精度</span>
      <input class="num" value="3" readonly>
    </div>
    <hr class="rule">
  </div>
  <div class="more"><i class="caret"></i></div>
  <div class="dlg-foot">
    <button class="act" type="button">确定</button>
    <button class="act" type="button">应用</button>
    <button class="act" type="button">取消</button>
  </div>
</aside>

<!-- site watermark over everything -->
<div class="wm">
  <svg class="wm-hex" viewBox="0 0 72 82" width="72" height="82">
    <path d="M35 1 70 21V61L35 81 0 61V21z" fill="#7cc8f2" fill-opacity=".42"/>
    <path d="M35 1 70 21V61L60 67C66 40 55 14 35 1z" fill="#4fb0e8" fill-opacity=".38"/>
    <path d="M17 34 35 24 53 34V53L35 63 17 53z" fill="#3aaae8" fill-opacity=".35"/>
    <path d="M17 34 35 44V63L17 53z" fill="#2aa5e6" fill-opacity=".45"/>
    <path d="M8 30 35 15 60 30" fill="none" stroke="#fff" stroke-opacity=".6" stroke-width="3"/>
    <path d="M8 30V50" fill="none" stroke="#fff" stroke-opacity=".6" stroke-width="3"/>
    <path d="M17 53V70L35 81 60 67 53 53 35 63z" fill="#39a8e8" fill-opacity=".55"/>
  </svg>
  <div class="wm-text"><span class="wm-3d">3D</span>世界网</div>
  <div class="wm-www">www.</div>
</div>
</body>
</html>
```

FILE: styles.css
```css
* { box-sizing: border-box; }
html, body { margin: 0; padding: 0; }
body {
  width: 922px; height: 1024px; overflow: hidden; position: relative; background: #fff;
  font-family: "Open Sans", "Noto Sans CJK SC", sans-serif; font-size: 12px; color: #222;
}
.defs { position: absolute; }
.app { display: flex; flex-direction: column; height: 1024px; width: 922px; }

/* window chrome */
.top-strip { height: 16px; background: linear-gradient(#dbe7f3, #cfdeec); border-bottom: 1px solid #a9a9a9; flex: none; }
.title-bar { height: 33px; line-height: 35px; padding-left: 269px; white-space: pre; font-size: 12px; color: #111; background: #fff; word-spacing: 1.5px; letter-spacing: .2px; flex: none; }
.tab-strip { height: 28px; background: #c8d6d4; display: flex; justify-content: flex-end; align-items: flex-start; padding-top: 5px; flex: none; }
.find { width: 60px; margin-right: -30px; height: 19px; border: 1px solid #bbb; background: #fff; color: #aaa; font: 11px/17px "Noto Sans CJK SC", sans-serif; padding: 0 2px; white-space: nowrap; overflow: hidden; }

/* ribbon */
.ribbon { height: 94px; display: flex; padding-top: 5px; background: #fff; border-bottom: 1px solid #ddd; flex: none; }
.grp { display: flex; flex-direction: column; position: relative; border-right: 1px solid #ddd; height: 85px; flex: none; }
.g0 { width: 28px; }
.g1 { width: 279px; }
.g2 { width: 39px; }
.g3 { width: 61px; }
.g4 { width: 104px; }
.g5 { width: 398px; }
.g6 { flex: 1; border-right: 0; }
.grp-body { height: 71px; flex: none; }
.grp-foot { height: 14px; display: flex; align-items: center; justify-content: flex-end; padding-right: 8px; }
.grp-label { flex: 1; text-align: center; color: #2f8fc8; font-size: 11px; line-height: 14px; white-space: nowrap; letter-spacing: .1px; font-family: "Noto Sans", "Noto Sans CJK SC", sans-serif; }
.g1 .grp-label, .g4 .grp-label, .g5 .grp-label { margin-right: 5px; }

.caret { display: inline-block; width: 0; height: 0; border-left: 3px solid transparent; border-right: 3px solid transparent; border-top: 3px solid #222; flex: none; }
.caret-grey { border-top-color: #bbb; border-left-width: 4px; border-right-width: 4px; border-top-width: 4px; }
.caret-up { border-top: 0; border-bottom: 3px solid #bbb; }
.caret-bar { position: relative; }
.caret-bar::before { content: ""; position: absolute; left: -3px; top: -6px; width: 6px; height: 1px; background: #222; }
.caret-top { position: absolute; top: 6px; left: 13px; }

.g0-body { display: flex; flex-direction: column; gap: 4px; padding-top: 1px; }
.i20 { width: 20px; height: 20px; flex: none; display: block; }
.i18 { width: 18px; height: 18px; flex: none; display: block; }
.red-mark { width: 5px; height: 4px; background: #e33; margin-top: 6px; }

.sketch { display: flex; align-items: flex-start; }
.sheet-col { width: 122px; flex: none; padding: 6px 0 0 12px; }
.select { width: 98px; height: 20px; border: 1px solid #aaa; color: #bbb; display: flex; align-items: center; justify-content: space-between; padding: 0 7px 0 3px; font-size: 11px; }
.disabled-label { width: 98px; text-align: center; margin-top: 10px; color: #ccc; font-size: 11px; line-height: 16px; }
.gallery { border: 1px solid #d4d4d4; height: 66px; flex: none; display: grid; align-items: center; justify-items: center; }
.gal-a { width: 66px; grid-template-columns: 1fr 1fr; grid-template-rows: 1fr 1fr; }
.gal-b { width: 46px; grid-template-columns: 1fr 1fr; grid-template-rows: 1fr 1fr 1fr; }
.ig { width: 24px; height: 24px; }
.ih { width: 17px; height: 17px; }
.gal-arrows { width: 23px; height: 66px; flex: none; display: flex; flex-direction: column; align-items: flex-start; padding: 10px 0 0 5px; gap: 18px; }

.tb-col { display: flex; flex-direction: column; align-items: center; gap: 4px; }
.edit-col { display: flex; flex-direction: column; align-items: center; }
.i-edit { width: 32px; height: 30px; }
.edit-label { font-size: 11px; line-height: 16px; margin-top: 6px; color: #222; }

.rows { display: flex; flex-direction: column; padding-top: 1px; }
.irow { height: 30px; display: flex; align-items: center; padding-left: 3px; }
.ic { width: 20px; height: 20px; margin: 0 1.5px; flex: none; display: block; }
.isep { width: 1px; height: 20px; background: #ddd; margin: 0 2.5px; flex: none; }
.g4 .irow { padding-left: 3.5px; }
.g6-body { padding-top: 6px; gap: 10px; }

.svg-num { font: bold 8px "Liberation Sans", sans-serif; text-anchor: middle; }
.svg-tiny { font: 8px "Liberation Sans", sans-serif; text-anchor: middle; }
.svg-h7 { font: bold 7px "Liberation Sans", sans-serif; text-anchor: middle; }
.svg-abc { font: bold 7.5px "Liberation Sans", sans-serif; text-anchor: middle; fill: #333; }
.svg-xyz { font: bold 8px "Liberation Sans", sans-serif; text-anchor: middle; fill: #b33; }
.svg-a-blue { font: bold 12px "Liberation Sans", sans-serif; text-anchor: middle; fill: #3d46b0; }
.svg-a-small { font: bold 18px "Liberation Sans", sans-serif; fill: #3d46b0; }
.svg-a-big { font: italic bold 28px "Liberation Serif", serif; fill: #3d46b0; }

/* secondary toolbar */
.toolbar { height: 31px; background: #fff; display: flex; align-items: center; margin-left: -10px; flex: none; }
.tb { width: 20px; height: 20px; margin: 0 2.5px; flex: none; display: block; }
.tv { margin: 0 2px; }
.tv-gap { margin-right: 4px; }
.tsep { width: 1px; height: 22px; background: #ddd; margin: 0 8px 0 7px; flex: none; }
.tcaret { margin: 0 3px; }

/* graphics window */
.canvas { height: 781px; background: #000; border-top: 2px solid #888; position: relative; overflow: hidden; flex: none; }
.drawing { display: block; position: absolute; left: 0; top: -1px; }
.teal, .whiteln, .greyln, .greyln2 { transform: translate(.5px, .5px); }
.teal path { fill: none; stroke: #1f8e98; stroke-width: 1; }
.whiteln path { fill: none; stroke: #ddd; stroke-width: 1; }
.greyln path { fill: none; stroke: #969696; stroke-width: 1; }
.greyln2 path { fill: none; stroke: #969696; stroke-width: 1.500; }
.frame-under { fill: none; stroke: #444; stroke-width: 1.500; }
.dash-frame { fill: none; stroke: #aaa; stroke-width: 1.500; stroke-dasharray: 9 4; }
.whitedash { fill: none; stroke: #ddd; stroke-dasharray: 8 3; }
.viewbox { fill: none; stroke: #777; }
.orange { fill: none; stroke: #e68a00; stroke-width: 1.300; }
.orange2 { fill: none; stroke: #e08600; stroke-width: 1.800; }
.centre { fill: none; stroke: #a63a3a; }
.cut-olive { fill: none; stroke: #b0a430; stroke-width: 1.500; }
.cut-red { fill: none; stroke: #8e1c1c; stroke-width: 2; }
.olive-dot { fill: #b0a430; }
.hatch { fill: none; stroke: #ccc; }
.origin { fill: none; stroke: #2fe03a; stroke-width: 1.200; }
.dim-a { fill: #eee; font: 12px "DejaVu Sans Mono", monospace; text-anchor: middle; }
.section { fill: #ddd; font: 9px "DejaVu Sans Mono", monospace; text-anchor: middle; }
.tiny text { fill: #c4c4c4; font: bold 8px "Noto Sans CJK SC", sans-serif; text-anchor: middle; }
.tiny .wide { letter-spacing: 2px; }
.status-msg { position: absolute; left: -2px; bottom: 4px; color: #c8c8c8; font: 12px "Liberation Sans", "Noto Sans CJK SC", sans-serif; }

.status-bar { height: 22px; background: #fff; flex: none; }
.bottom-strip { height: 7px; background: #c8d6d4; border-top: 1px solid #aaa; border-bottom: 1px solid #bbb; flex: none; }
.web-row { flex: 1; overflow: hidden; position: relative; display: flex; margin-left: 395px; border-left: 1px solid #e4e4e4; padding-left: 22px; color: #1515e8; font: 17px/18px "Noto Sans CJK SC", sans-serif; }
.web-a { width: 138px; white-space: nowrap; margin-top: -11px; flex: none; }
.web-flag { width: 7px; height: 7px; background: #f55; margin-left: 13px; flex: none; }
.web-b { margin-left: 81px; margin-top: -11px; white-space: nowrap; letter-spacing: -.2px; flex: none; }

/* dialog */
.dialog { position: absolute; left: 446px; top: 290px; width: 328px; height: 715px; background: #e6e6e6; display: flex; flex-direction: column; border: 1px solid #c8c8c8; border-top: 0; font-family: "Noto Sans CJK SC", sans-serif; }
.dlg-head { height: 24px; background: #5c8780; display: flex; align-items: center; color: #e8efee; flex: none; margin: 0 -1px; padding: 0 0 3px 7px; }
.dlg-gear { width: 15px; height: 15px; margin-top: 3px; }
.dlg-title { flex: 1; margin-left: 9px; font-size: 13px; }
.dlg-btn { width: 14px; height: 14px; margin: 3px 5px 0 0; }
.dlg-btn:last-child { margin-right: 8px; }
.dlg-tabs { height: 38px; display: flex; align-items: flex-end; padding-left: 9px; flex: none; }
.tab { width: 63px; height: 28px; border: 1px solid #c4c4c4; border-bottom: 0; text-align: center; line-height: 25px; font-size: 12px; background: #e6e6e6; color: #222; }
.tab-on { width: 68px; height: 31px; margin-bottom: -1px; background: #fff; color: #2f8fc8; line-height: 27px; position: relative; z-index: 1; border-color: #bbb; }
.panel { width: 308px; height: 590px; margin-left: 9px; background: #fff; border: 1px solid #bbb; flex: none; }
.sec-head { height: 33px; display: flex; align-items: center; justify-content: space-between; padding: 0 11px 5px 11px; color: #2f8fc8; font-size: 13px; }
.sec-first { height: 32px; }
.chev { width: 12px; height: 8px; }
.listbox { width: 280px; height: 295px; margin-left: 13px; border: 1px solid #ddd; padding: 3px; }
.list-main { display: flex; gap: 5px; align-items: flex-start; }
.list-grid { width: 242px; flex: none; height: 285px; background: #f4f4f4; outline: 1px solid #ddd; }
.list-head { display: flex; height: 21px; background: #f0f0f0; border-bottom: 1px solid #ddd; }
.lh { height: 20px; padding-left: 6px; line-height: 22px; font-size: 12px; border-right: 1px solid #ddd; }
.c1 { width: 81px; }
.c2 { width: 80px; }
.c3 { width: 81px; border-right: 0; position: relative; }
.sort-up { position: absolute; left: 36px; top: 8px; width: 0; height: 0; border-left: 5px solid transparent; border-right: 5px solid transparent; border-bottom: 5px solid #222; }
.list-body { display: flex; height: 240px; overflow: hidden; }
.rows-table { width: 226px; border-collapse: collapse; table-layout: fixed; flex: none; background: #fff; align-self: flex-start; }
.rows-table td { height: 20px; padding: 1px 0 0 4px; border-right: 1px solid #e6e6e6; border-bottom: 1px solid #eee; font-size: 12px; color: #222; white-space: nowrap; overflow: hidden; line-height: 18px; font-family: "Open Sans", "Noto Sans CJK SC", sans-serif; }
.rows-table td:nth-child(1) { width: 81px; }
.rows-table td:nth-child(2) { width: 80px; }
.rows-table td:last-child { border-right: 0; }
.rows-table tr:nth-child(even) td { background: #f9f9f9; }
.vscroll { width: 16px; flex: none; background: #f2f2f2; display: flex; flex-direction: column; align-items: center; }
.sb-up { width: 0; height: 0; border-left: 3px solid transparent; border-right: 3px solid transparent; border-bottom: 3px solid #444; margin-top: 8px; }
.sb-down { width: 0; height: 0; border-left: 3px solid transparent; border-right: 3px solid transparent; border-top: 3px solid #444; margin-top: 190px; }
.vthumb { width: 14px; height: 21px; margin-top: 7px; border: 1px solid #999; border-radius: 2px; background: linear-gradient(90deg, #f8f8f8, #d8d8d8); display: flex; flex-direction: column; justify-content: center; align-items: center; gap: 1px; }
.vthumb b { width: 6px; height: 1px; background: #666; }
.hscroll { height: 16px; margin-top: 6px; background: #f2f2f2; display: flex; align-items: center; width: 226px; }
.sb-left { width: 0; height: 0; border-top: 3px solid transparent; border-bottom: 3px solid transparent; border-right: 3px solid #444; margin-left: 6px; }
.sb-right { width: 0; height: 0; border-top: 3px solid transparent; border-bottom: 3px solid transparent; border-left: 3px solid #444; margin-left: 21px; }
.hthumb { width: 173px; height: 15px; margin-left: 10px; border: 1px solid #999; border-radius: 2px; background: linear-gradient(#f4f4f4, #cfcfcf); display: flex; justify-content: center; align-items: center; gap: 1px; }
.hthumb b { width: 1px; height: 6px; background: #555; }
.x-btn { width: 24px; height: 24px; background: #fff; border: 1px solid #aaa; padding: 3px; display: flex; align-items: center; justify-content: center; flex: none; }
.inherit { width: 280px; height: 104px; margin: 2px 0 0 13px; background: #eef4f5; border: 1px solid #ddd; }
.inh-head { height: 29px; display: flex; align-items: center; justify-content: space-between; padding: 0 5px 7px 8px; color: #2f8fc8; font-size: 12px; }
.inh-head .chev { width: 10px; height: 7px; }
.inh-row { display: flex; gap: 2px; height: 34px; padding-left: 8px; }
.inh-label { width: 228px; height: 32px; line-height: 30px; font-size: 12px; }
.inh-on { background: #fbd56b; }
.sq-btn { width: 32px; height: 32px; padding: 0; background: #fff; border: 1px solid #aaa; display: flex; align-items: center; justify-content: center; flex: none; }
.inherit .sq-btn { background: #f3f6f4; }
.inherit .sq-on { background: #faeaa8; border-color: #fbd56b; }
.rule { width: 298px; height: 0; margin: 8px 0 0 4px; border: 0; border-top: 2px solid #d4d4d4; }
.form-row { display: flex; align-items: center; justify-content: space-between; padding: 0 13px; font-size: 12px; }
.form-row span { position: relative; top: -1px; }
.row-file { height: 32px; }
.row-prec { height: 23px; }
.num { width: 82px; height: 23px; border: 1px solid #aaa; background: #fff; text-align: right; font: 13px "Open Sans", sans-serif; padding: 0 5px; outline: 0; color: #222; }
.more { height: 18px; margin: 0 5px; padding-top: 3px; display: flex; justify-content: center; align-items: center; border-bottom: 1px solid #cfcfcf; flex: none; }
.more .caret { border-left-width: 5px; border-right-width: 5px; border-top-width: 5px; }
.dlg-foot { display: flex; justify-content: flex-end; gap: 5px; padding: 8px 15px 0 0; }
.act { width: 54px; height: 25px; background: #d2d2d2; border: 1px solid #aaa; padding: 1px 0 0; font: 12px "Noto Sans CJK SC", sans-serif; color: #222; }

/* watermark */
.wm { position: absolute; left: 0; top: 0; width: 0; height: 0; }
.wm-hex { position: absolute; left: 640px; top: 929px; }
.wm-text { position: absolute; left: 720px; top: 933px; font: bold 38px/50px "Noto Sans CJK SC", sans-serif; color: rgba(255, 255, 255, .47); white-space: nowrap; display: flex; align-items: baseline; }
.wm-3d { width: 63px; font-size: 46px; }
.wm-www { position: absolute; left: 722px; top: 985px; font: bold 16px/18px "Liberation Sans", sans-serif; letter-spacing: 2px; color: rgba(255, 255, 255, .5); }
```
